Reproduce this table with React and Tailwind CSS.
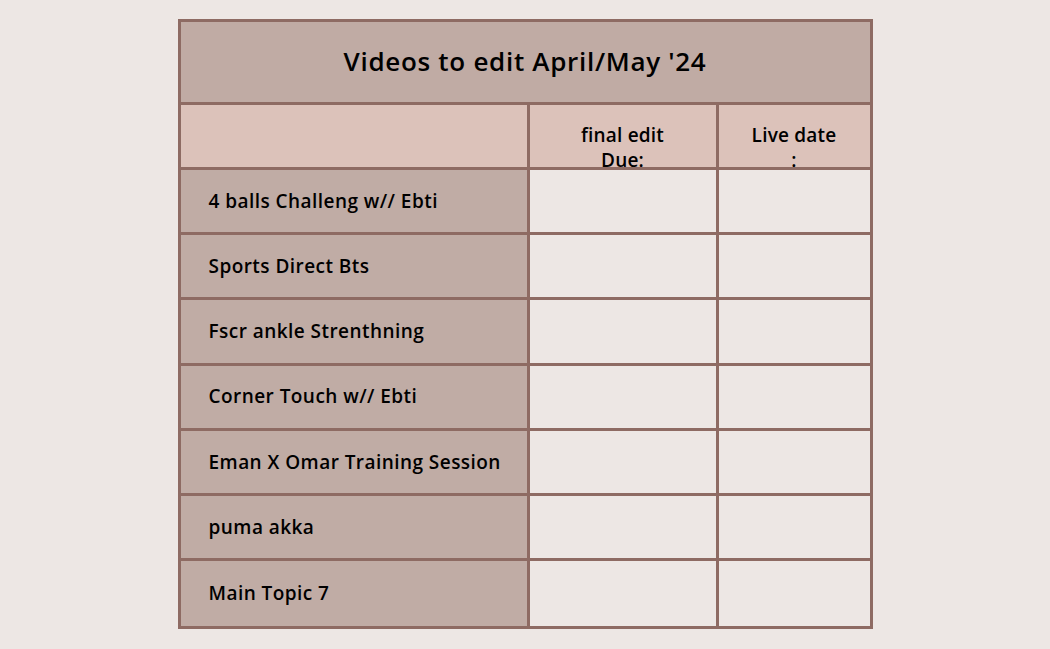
import React from 'react';

const topics = [
  '4 balls Challeng w// Ebti',
  'Sports Direct Bts',
  'Fscr ankle Strenthning',
  'Corner Touch w// Ebti',
  'Eman X Omar Training Session',
  'puma akka',
  'Main Topic 7',
];

export default function App() {
  return (
    <div className="min-h-[649px] bg-[#ede7e4] pt-[19px] text-black" style={{ fontFamily: '"Open Sans", "Noto Sans", sans-serif' }}>
      <div className="mx-auto w-[695px] border-[3px] border-[#8e6b63]">
        {/* title */}
        <div className="flex h-[83px] items-center justify-center border-b-[3px] border-[#8e6b63] bg-[#c0aba4] pb-[2px] text-[26px] font-[550] tracking-[0.7px]">
          Videos to edit April/May '24
        </div>

        <div className="grid grid-cols-[349px_189px_151px]">
          {/* column headers */}
          <div className="h-[65px] border-b-[3px] border-r-[3px] border-[#8e6b63] bg-[#dcc2ba]" />
          <div className="h-[65px] border-b-[3px] border-r-[3px] border-[#8e6b63] bg-[#dcc2ba] pt-[18px] text-center text-[19px] font-[550] leading-[25px] tracking-[0.2px]">
            final edit
            <br />
            Due:
          </div>
          <div className="h-[65px] border-b-[3px] border-[#8e6b63] bg-[#dcc2ba] pt-[18px] text-center text-[19px] font-[550] leading-[25px] tracking-[0.2px]">
            Live date
            <br />
            :
          </div>

          {topics.map((t, i) => {
            const last = i === topics.length - 1;
            const b = last ? '' : 'border-b-[3px]';
            return (
              <React.Fragment key={t}>
                <div className={`flex h-[65.2px] items-center border-r-[3px] border-[#8e6b63] bg-[#c0aca5] pl-[28px] text-[19px] font-[550] tracking-[0.45px] ${b}`}>
                  {t}
                </div>
                <div className={`h-[65.2px] border-r-[3px] border-[#8e6b63] bg-[#ede7e4] ${b}`} />
                <div className={`h-[65.2px] border-[#8e6b63] bg-[#ede7e4] ${b}`} />
              </React.Fragment>
            );
          })}
        </div>
      </div>
    </div>
  );
}
